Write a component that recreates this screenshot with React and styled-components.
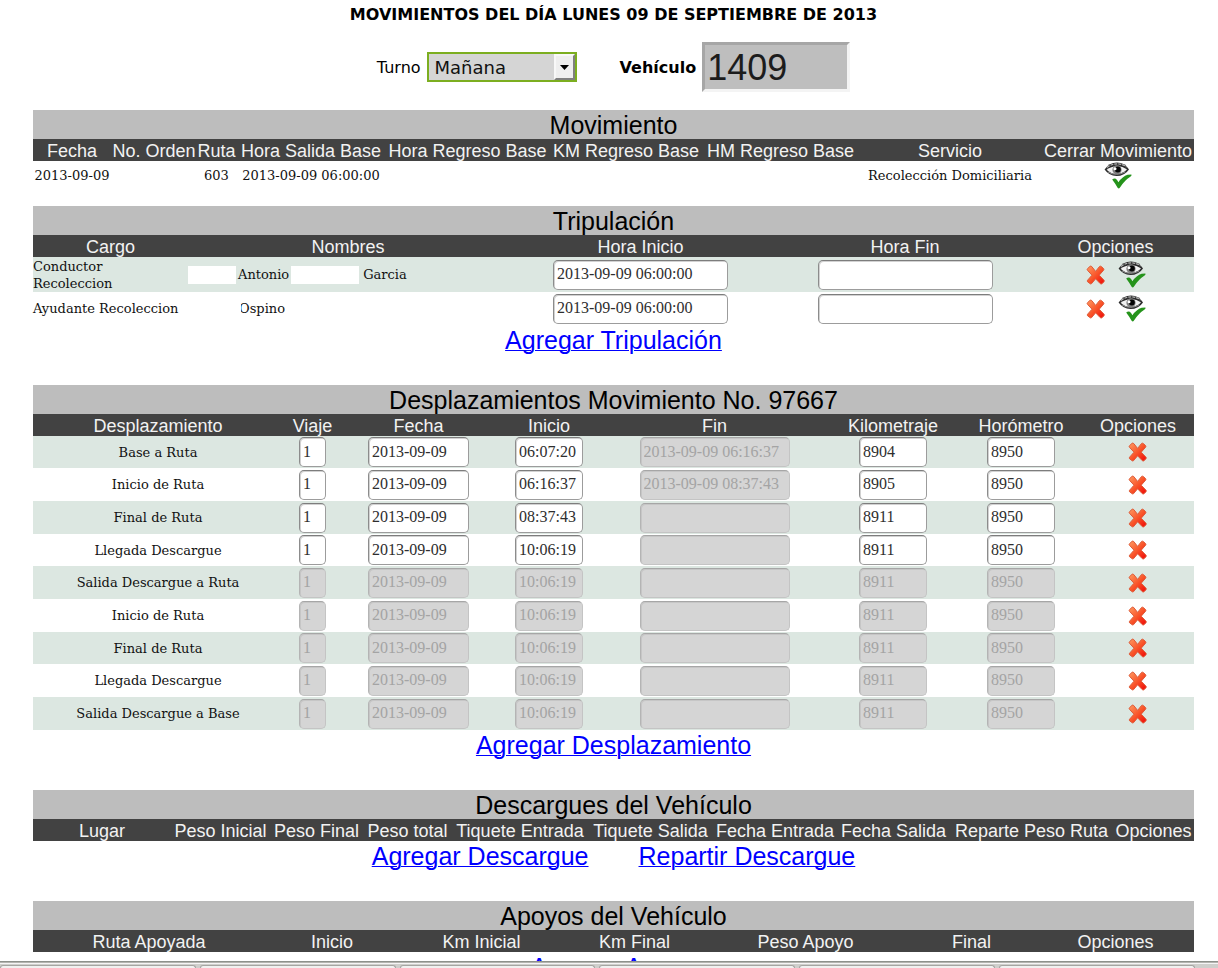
import React from "react";
import styled, { createGlobalStyle } from "styled-components";

const GlobalStyle = createGlobalStyle`
  * {
    box-sizing: border-box;
  }
  body {
    margin: 0;
    background: #fff;
    color: #000;
    font-family: "DejaVu Sans", sans-serif;
  }
`;

const Screen = styled.div`
  display: flex;
  flex-direction: column;
  height: 100vh;
  overflow: hidden;
`;

const Page = styled.main`
  flex: 1;
  min-height: 0;
  overflow: hidden;
  padding: 0 24px 0 33px;
`;

const Title = styled.h1`
  margin: 0 0 12px;
  font-size: 16px;
  line-height: 30px;
  text-align: center;
`;

const Controls = styled.form`
  display: flex;
  justify-content: center;
  align-items: center;
  gap: 43px;
  margin-bottom: 18px;
`;

const Field = styled.div`
  display: flex;
  align-items: center;
  gap: 6px;
  font-size: 16px;
`;

const Label = styled.label`
  font-weight: ${p => (p.$bold ? "bold" : "normal")};
`;

const SelectBox = styled.div`
  position: relative;
  width: 150px;
`;

const Select = styled.select`
  appearance: none;
  display: block;
  width: 100%;
  height: 30px;
  padding: 0 6px;
  border: 2px solid #7cae20;
  border-radius: 0;
  background: #d5d5d5;
  color: #111;
  font: 18px "DejaVu Sans", sans-serif;
`;

const SelectArrow = styled.span`
  position: absolute;
  top: 2px;
  right: 2px;
  display: flex;
  align-items: center;
  justify-content: center;
  width: 21px;
  height: 26px;
  border: 2px solid;
  border-color: #f8f8f8 #808080 #808080 #f8f8f8;
  background: #efefef;
  pointer-events: none;
`;

const VehicleInput = styled.input`
  width: 148px;
  height: 50px;
  padding: 2px 2px 0;
  border: 3px solid;
  border-color: #a6a6a6 #f4f4f4 #f4f4f4 #a6a6a6;
  background: #bebebe;
  color: #1c1c1c;
  font: 36px "Liberation Sans", Arial, sans-serif;
`;

const Table = styled.table`
  width: 100%;
  table-layout: fixed;
  border-collapse: collapse;
  margin-bottom: ${p => p.$gap || 0}px;
`;

const Col = styled.col`
  width: ${p => p.$w}px;
`;

const Caption = styled.caption`
  height: 29px;
  padding-top: 1px;
  background: #bdbdbd;
  font: 25px/28px "Liberation Sans", Arial, sans-serif;
`;

const Th = styled.th`
  height: 22px;
  padding: 2px 0 0;
  background: #424242;
  color: #f2f2f2;
  font: 18px/20px "Liberation Sans", Arial, sans-serif;
  white-space: nowrap;
`;

const Row = styled.tr`
  height: ${p => p.$h || 33}px;
  background: ${p => (p.$striped ? "#dce7e1" : "#fff")};
`;

const Td = styled.td`
  padding: 0;
  font: 13px/17px "DejaVu Serif", serif;
  color: #111;
  text-align: center;
`;

const RoleTd = styled(Td)`
  padding-right: 4px;
  text-align: left;
`;

const CellInput = styled.input`
  display: block;
  width: ${p => p.$w}px;
  height: 30px;
  margin: 0 auto;
  padding: 0 3px 1px;
  border: 1px solid;
  border-color: #7d7d7d #9c9c9c #9c9c9c #8c8c8c;
  border-radius: 5px;
  background: #fff;
  box-shadow: inset 1px 1px 0 #d2d2d2;
  color: #2e2e2e;
  font: 16px "Liberation Serif", "Times New Roman", serif;

  &:disabled {
    border-color: #a6a6a6 #c4c4c4 #c4c4c4 #b4b4b4;
    background: #d5d5d5;
    box-shadow: inset 1px 1px 0 #c6c6c6;
    color: #a4a4a4;
  }
`;

const Names = styled.div`
  display: flex;
  align-items: center;
  gap: ${p => p.$gap || 0}px;
`;

const Blank = styled.span`
  width: ${p => p.$w}px;
  height: 18px;
  margin-right: ${p => p.$after || 0}px;
  background: #fff;
`;

const ClippedName = styled.span`
  overflow: hidden;
  text-indent: -2px;
`;

const Options = styled.div`
  display: flex;
  justify-content: center;
  align-items: center;
  gap: 12px;
`;

const IconButton = styled.button`
  display: block;
  margin: 0 ${p => (p.$center ? "auto" : "0")};
  padding: 0;
  border: 0;
  background: none;
  line-height: 0;
  cursor: pointer;
`;

const Links = styled.div`
  display: flex;
  justify-content: center;
  gap: 50px;
  height: 60px;
  font: 25px/30px "Liberation Sans", Arial, sans-serif;
`;

const Link = styled.a`
  color: #0000ff;
  text-decoration: underline;
  text-decoration-thickness: 1px;
`;

const Taskbar = styled.footer`
  display: flex;
  gap: 4px;
  height: 7px;
  padding-top: 3px;
  padding-right: 23px;
  border-top: 1px solid #8d918b;
  background: linear-gradient(#b4b4b0 1px, #f5f5f5 1px, #f5f5f5 2px, #cfcfcc 2px);
`;

const Task = styled.div`
  flex: 1;
  border: 1px solid #a5a5a2;
  border-bottom: 0;
  border-radius: 3px 3px 0 0;
  background: #f1f1f0;
`;

const DeleteIcon = () => (
  <svg width="20" height="20" viewBox="0 0 20 20" aria-hidden="true">
    <defs>
      <linearGradient id="cross" x1="0" y1="0" x2="1" y2="1">
        <stop offset="0" stopColor="#ff9a62" />
        <stop offset="0.5" stopColor="#f9552a" />
        <stop offset="1" stopColor="#f00505" />
      </linearGradient>
    </defs>
    <path
      d="M4.2 1.2Q5 .8 5.8 1.6L9.6 6.4 13.6 1.4Q14.4.8 15.4 1.6L17.6 3.6Q18.2 4.4 17.6 5.2L13.2 10.2 18 15.2Q18.6 16 18 16.8L15.8 18.8Q15 19.4 14.2 18.6L9.6 13.8 5.6 18.6Q4.8 19.4 4 18.6L1.6 16.8Q.8 16 1.6 15.2L6 10.2 1.6 5.4Q.8 4.6 1.4 3.8Z"
      fill="url(#cross)"
      stroke="#dd5a38"
      strokeWidth="1"
      strokeLinejoin="round"
    />
  </svg>
);

const CloseShiftIcon = () => (
  <svg width="28" height="27" viewBox="0 0 28 27" aria-hidden="true">
    <path
      d="M.6 7.6Q5 .6 13 .6 21 .6 25 7.4 20.5 14 12.5 14 5 14 .6 7.6Z"
      fill="#2b2b2b"
    />
    <path
      d="M3 5.4Q8 1.8 13 1.8 18.5 1.8 22.6 5"
      fill="none"
      stroke="#b5b5b5"
      strokeWidth="1.2"
      strokeDasharray="3 1"
    />
    <path d="M2.6 7.8Q7 4.2 12.8 4.2 19 4.2 23 7.6 18.5 12 12.6 12 7 12 2.6 7.8Z" fill="#f2f2f2" />
    <path d="M4 10Q12 14.6 21.4 10" fill="none" stroke="#8f8f8f" strokeWidth="1" />
    <circle cx="13" cy="7.8" r="4.6" fill="#808080" />
    <circle cx="13.8" cy="7.6" r="3" fill="#050505" />
    <circle cx="11" cy="6.8" r="1.5" fill="#fff" />
    <path
      d="M8.2 17.6Q10 16 11.8 16.8 13.4 18 14.4 20.2 18.6 14.4 23.6 12.8L27.4 12.6Q28 13.4 26.6 14.6 20.4 18.6 15.8 25.8 14.8 27 13.6 25.8 11.2 21.6 8.2 17.6Z"
      fill="#25931b"
    />
  </svg>
);

const DataTable = ({ title, columns, gap, children }) => (
  <Table $gap={gap}>
    <Caption>{title}</Caption>
    <colgroup>
      {columns.map(([name, width]) => (
        <Col key={name} $w={width} />
      ))}
    </colgroup>
    <thead>
      <tr>
        {columns.map(([name]) => (
          <Th key={name} scope="col">
            {name}
          </Th>
        ))}
      </tr>
    </thead>
    {children && <tbody>{children}</tbody>}
  </Table>
);

const MOVEMENT_COLUMNS = [
  ["Fecha", 78],
  ["No. Orden", 86],
  ["Ruta", 39],
  ["Hora Salida Base", 150],
  ["Hora Regreso Base", 163],
  ["KM Regreso Base", 154],
  ["HM Regreso Base", 155],
  ["Servicio", 184],
  ["Cerrar Movimiento", 152]
];

const CREW_COLUMNS = [
  ["Cargo", 155],
  ["Nombres", 320],
  ["Hora Inicio", 265],
  ["Hora Fin", 264],
  ["Opciones", 157]
];

const TRIP_COLUMNS = [
  ["Desplazamiento", 250],
  ["Viaje", 59],
  ["Fecha", 153],
  ["Inicio", 108],
  ["Fin", 223],
  ["Kilometraje", 134],
  ["Horómetro", 122],
  ["Opciones", 112]
];

const UNLOAD_COLUMNS = [
  ["Lugar", 138],
  ["Peso Inicial", 99],
  ["Peso Final", 93],
  ["Peso total", 89],
  ["Tiquete Entrada", 136],
  ["Tiquete Salida", 125],
  ["Fecha Entrada", 124],
  ["Fecha Salida", 113],
  ["Reparte Peso Ruta", 163],
  ["Opciones", 81]
];

const SUPPORT_COLUMNS = [
  ["Ruta Apoyada", 232],
  ["Inicio", 134],
  ["Km Inicial", 165],
  ["Km Final", 141],
  ["Peso Apoyo", 201],
  ["Final", 131],
  ["Opciones", 157]
];

const TRIPS = [
  { name: "Base a Ruta", start: "06:07:20", end: "2013-09-09 06:16:37", km: "8904" },
  { name: "Inicio de Ruta", start: "06:16:37", end: "2013-09-09 08:37:43", km: "8905" },
  { name: "Final de Ruta", start: "08:37:43", end: "", km: "8911" },
  { name: "Llegada Descargue", start: "10:06:19", end: "", km: "8911" },
  { name: "Salida Descargue a Ruta", start: "10:06:19", end: "", km: "8911", locked: true },
  { name: "Inicio de Ruta", start: "10:06:19", end: "", km: "8911", locked: true },
  { name: "Final de Ruta", start: "10:06:19", end: "", km: "8911", locked: true },
  { name: "Llegada Descargue", start: "10:06:19", end: "", km: "8911", locked: true },
  { name: "Salida Descargue a Base", start: "10:06:19", end: "", km: "8911", locked: true }
];

const CrewRow = ({ role, names, striped, height }) => (
  <Row $striped={striped} $h={height}>
    <RoleTd>{role}</RoleTd>
    <Td>{names}</Td>
    <Td>
      <CellInput $w={175} aria-label="Hora Inicio" defaultValue="2013-09-09 06:00:00" />
    </Td>
    <Td>
      <CellInput $w={175} aria-label="Hora Fin" defaultValue="" />
    </Td>
    <Td>
      <Options>
        <IconButton type="button" aria-label="Eliminar">
          <DeleteIcon />
        </IconButton>
        <IconButton type="button" aria-label="Cerrar">
          <CloseShiftIcon />
        </IconButton>
      </Options>
    </Td>
  </Row>
);

const TripRow = ({ trip, index }) => {
  const { name, start, end, km, locked } = trip;
  return (
    <Row $striped={index % 2 === 0} $h={index % 3 === 0 ? 32 : 33}>
      <Td>{name}</Td>
      <Td>
        <CellInput $w={27} aria-label="Viaje" defaultValue="1" disabled={locked} />
      </Td>
      <Td>
        <CellInput $w={101} aria-label="Fecha" defaultValue="2013-09-09" disabled={locked} />
      </Td>
      <Td>
        <CellInput $w={68} aria-label="Inicio" defaultValue={start} disabled={locked} />
      </Td>
      <Td>
        <CellInput $w={150} aria-label="Fin" defaultValue={end} disabled />
      </Td>
      <Td>
        <CellInput $w={68} aria-label="Kilometraje" defaultValue={km} disabled={locked} />
      </Td>
      <Td>
        <CellInput $w={68} aria-label="Horómetro" defaultValue="8950" disabled={locked} />
      </Td>
      <Td>
        <IconButton type="button" $center aria-label="Eliminar">
          <DeleteIcon />
        </IconButton>
      </Td>
    </Row>
  );
};

export default function App() {
  return (
    <Screen>
      <GlobalStyle />
      <Page>
        <Title>MOVIMIENTOS DEL DÍA LUNES 09 DE SEPTIEMBRE DE 2013</Title>
        <Controls>
          <Field>
            <Label htmlFor="turno">Turno</Label>
            <SelectBox>
              <Select id="turno" defaultValue="Mañana">
                <option>Mañana</option>
              </Select>
              <SelectArrow>
                <svg width="9" height="5" viewBox="0 0 9 5" aria-hidden="true">
                  <path d="M0 0H9L4.5 5Z" fill="#000" />
                </svg>
              </SelectArrow>
            </SelectBox>
          </Field>
          <Field>
            <Label htmlFor="vehiculo" $bold>
              Vehículo
            </Label>
            <VehicleInput id="vehiculo" defaultValue="1409" />
          </Field>
        </Controls>

        <DataTable title="Movimiento" columns={MOVEMENT_COLUMNS} gap={17}>
          <Row $h={28}>
            <Td>2013-09-09</Td>
            <Td />
            <Td>603</Td>
            <Td>2013-09-09 06:00:00</Td>
            <Td />
            <Td />
            <Td />
            <Td>Recolección Domiciliaria</Td>
            <Td>
              <IconButton type="button" $center aria-label="Cerrar Movimiento">
                <CloseShiftIcon />
              </IconButton>
            </Td>
          </Row>
        </DataTable>

        <DataTable title="Tripulación" columns={CREW_COLUMNS}>
          <CrewRow
            striped
            height={35}
            role="Conductor Recoleccion"
            names={
              <Names $gap={2}>
                <Blank $w={48} />
                Antonio
                <Blank $w={68} $after={2} />
                Garcia
              </Names>
            }
          />
          <CrewRow
            role="Ayudante Recoleccion"
            names={
              <Names>
                <Blank $w={53} />
                <ClippedName>Ospino</ClippedName>
              </Names>
            }
          />
        </DataTable>
        <Links>
          <Link href="#tripulacion">Agregar Tripulación</Link>
        </Links>

        <DataTable title="Desplazamientos Movimiento No. 97667" columns={TRIP_COLUMNS}>
          {TRIPS.map((trip, index) => (
            <TripRow key={index} trip={trip} index={index} />
          ))}
        </DataTable>
        <Links>
          <Link href="#desplazamiento">Agregar Desplazamiento</Link>
        </Links>

        <DataTable title="Descargues del Vehículo" columns={UNLOAD_COLUMNS} />
        <Links>
          <Link href="#descargue">Agregar Descargue</Link>
          <Link href="#repartir">Repartir Descargue</Link>
        </Links>

        <DataTable title="Apoyos del Vehículo" columns={SUPPORT_COLUMNS} />
        <Links>
          <Link href="#apoyo">Agregar Apoyo</Link>
        </Links>
      </Page>
      <Taskbar>
        <Task />
        <Task />
        <Task />
        <Task />
        <Task />
        <Task />
      </Taskbar>
    </Screen>
  );
}
